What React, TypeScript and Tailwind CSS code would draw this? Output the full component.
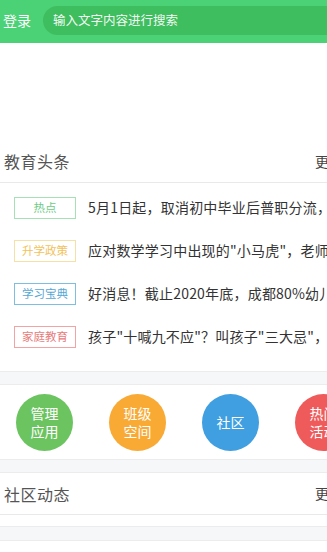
const FONT = { fontFamily: '"Noto Sans CJK SC", "Noto Sans", sans-serif' };

const NEWS = [
  {
    tag: "热点",
    cls: "border-[#a6e0b4] text-[#6ccb86]",
    text: "5月1日起，取消初中毕业后普职分流，教育部回应",
  },
  {
    tag: "升学政策",
    cls: "border-[#f6e0a6] text-[#f2c25a]",
    text: '应对数学学习中出现的"小马虎"，老师教你几招',
  },
  {
    tag: "学习宝典",
    cls: "border-[#7fbedf] text-[#58a7d4]",
    text: "好消息！截止2020年底，成都80%幼儿园将普惠",
  },
  {
    tag: "家庭教育",
    cls: "border-[#f2a3a3] text-[#e77b7b]",
    text: '孩子"十喊九不应"？叫孩子"三大忌"，家长要知道',
  },
];

const ENTRIES = [
  { label: ["管理", "应用"], cls: "bg-[#6cc460]" },
  { label: ["班级", "空间"], cls: "bg-[#f8aa35]" },
  { label: ["社区"], cls: "bg-[#3f9fe0]" },
  { label: ["热门", "活动"], cls: "bg-[#ef5a5a]" },
];

export default function App() {
  return (
    <div className="w-[327px] h-[552px] overflow-hidden bg-white" style={FONT}>
      <header className="h-[43px] bg-[#4bd176] flex items-center pl-[3px] gap-[12px]">
        <span className="text-white text-[14px] leading-none shrink-0 -mt-[3px]">登录</span>
        <div className="flex-1 h-[29px] -mr-[30px] -mt-[3px] rounded-full bg-[#3fbe60] flex items-center pl-[10px]">
          <span className="text-white/95 text-[12.5px] leading-none">输入文字内容进行搜索</span>
        </div>
      </header>

      <div className="h-[97px]" />

      <section>
        <div className="h-[43px] flex items-center justify-between pl-[4px] border-b border-[#e9e9e9]">
          <h2 className="text-[16px] text-[#555] tracking-[0.5px]">教育头条</h2>
          <span className="text-[14px] text-[#444] w-[12px] overflow-hidden whitespace-nowrap">更多</span>
        </div>
        <ul className="pt-[3px] pb-[13px]">
          {NEWS.map((n) => (
            <li key={n.tag} className="h-[43px] flex items-center pl-[14px] gap-[12px]">
              <span
                className={`shrink-0 w-[62px] h-[22px] border flex items-center justify-center text-[11.5px] leading-none ${n.cls}`}
              >
                {n.tag}
              </span>
              <span className="text-[14px] text-[#333] tracking-[0.2px] whitespace-nowrap overflow-hidden">
                {n.text}
              </span>
            </li>
          ))}
        </ul>
      </section>

      <div className="h-[14px] bg-[#f6f7f9] border-y border-[#ececec]" />

      <section className="h-[74px] flex items-center pl-[16px] gap-[36px] overflow-hidden">
        {ENTRIES.map((e) => (
          <div
            key={e.label.join("")}
            className={`shrink-0 w-[57px] h-[57px] rounded-full flex items-center justify-center text-center text-white text-[14px] leading-[18px] ${e.cls}`}
          >
            <p>
              {e.label[0]}
              {e.label[1] && (
                <>
                  <br />
                  {e.label[1]}
                </>
              )}
            </p>
          </div>
        ))}
      </section>

      <div className="h-[14px] bg-[#f6f7f9] border-y border-[#ececec]" />

      <section>
        <div className="h-[42px] flex items-center justify-between pl-[4px] border-b border-[#e9e9e9]">
          <h2 className="text-[16px] text-[#555] tracking-[0.5px]">社区动态</h2>
          <span className="text-[14px] text-[#444] w-[12px] overflow-hidden whitespace-nowrap">更多</span>
        </div>
        <div className="h-[11px]" />
        <div className="h-[15px] bg-[#f6f7f9] border-y border-[#ececec]" />
      </section>
    </div>
  );
}
